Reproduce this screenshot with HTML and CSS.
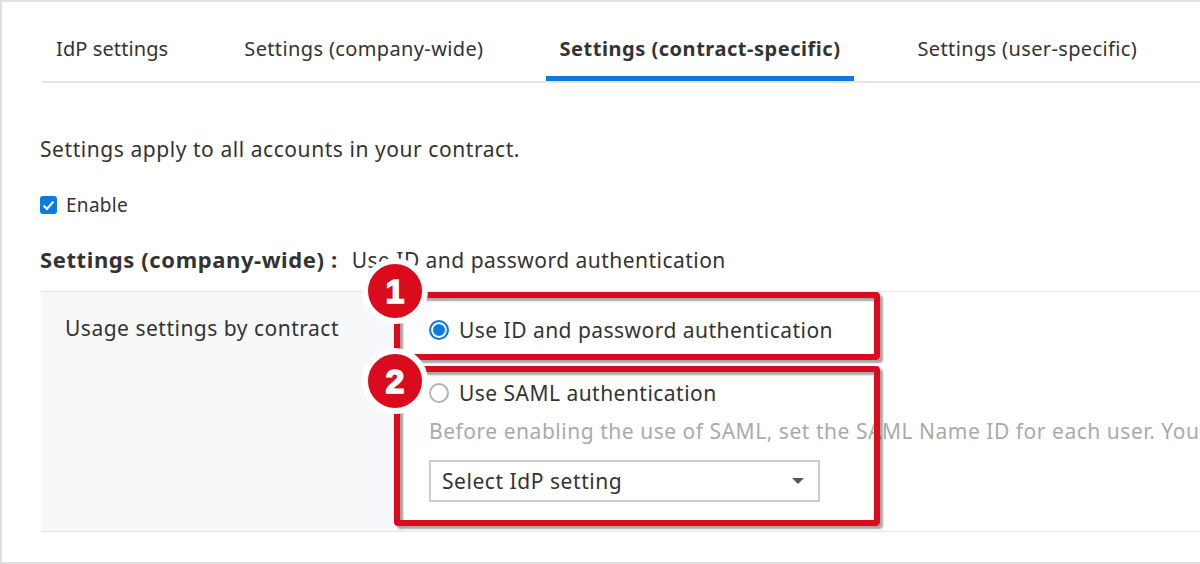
FILE: index.html
```html
<!DOCTYPE html>
<html lang="en">

<head>
    <meta charset="UTF-8">
    <meta name="viewport" content="width=device-width, initial-scale=1.0">
    <title>Settings</title>
    <link rel="stylesheet" href="styles.css">
</head>

<body>
    <div class="frame">
        <nav class="tabs">
            <a class="tab tab-idp">IdP settings</a>
            <a class="tab tab-company">Settings (company-wide)</a>
            <a class="tab tab-contract active">Settings (contract-specific)</a>
            <a class="tab tab-user">Settings (user-specific)</a>
        </nav>

        <p class="intro">Settings apply to all accounts in your contract.</p>

        <label class="enable">
            <span class="checkbox">
                <svg width="15" height="15" viewBox="0 0 15 15">
                    <path d="M2.6 7.6 L6 11 L12.4 3.6" fill="none" stroke="#fff" stroke-width="2.2" />
                </svg>
            </span>
            Enable
        </label>

        <div class="company-line">
            <strong>Settings (company-wide) :</strong>
            <span>Use ID and password authentication</span>
        </div>

        <div class="usage-row">
            <div class="usage-label">Usage settings by contract</div>
            <div class="usage-options">
                <div class="radio-line first">
                    <span class="radio checked"></span>
                    Use ID and password authentication
                </div>
                <div class="radio-line second">
                    <span class="radio"></span>
                    Use SAML authentication
                </div>
                <div class="hint">Before enabling the use of SAML, set the SAML Name ID for each user. You</div>
                <div class="select">
                    Select IdP setting
                    <span class="caret"></span>
                </div>
            </div>
        </div>

        <div class="callout callout-one"></div>
        <div class="callout callout-two"></div>
        <div class="badge badge-one">1</div>
        <div class="badge badge-two">2</div>
    </div>
</body>

</html>
```

FILE: styles.css
```css
* {
    box-sizing: border-box;
}

html,
body {
    margin: 0;
    padding: 0;
    height: 564px;
    overflow: hidden;
}

body {
    font-family: "Noto Sans", Arial, sans-serif;
    background-color: #fff;
    color: #333;
}

.frame {
    position: relative;
    width: 1200px;
    height: 564px;
    overflow: hidden;
    padding-left: 38px;
    border-top: 2px solid #e0e0e0;
    border-left: 2px solid #e0e0e0;
    border-bottom: 2px solid #e0e0e0;
}

.tabs {
    display: flex;
    height: 81px;
    margin-left: 2px;
    border-bottom: 2px solid #e6e6e6;
    font-size: 20px;
    letter-spacing: 0.37px;
    white-space: nowrap;
}

.tab {
    display: block;
    height: 79px;
    padding-top: 32px;
    line-height: 30px;
}

.tab-idp {
    margin-left: 14px;
    letter-spacing: 0.1px;
}

.tab-company {
    margin-left: 76px;
}

.tab-contract {
    margin-left: 63px;
    padding-left: 13px;
    padding-right: 14px;
    letter-spacing: 0.53px;
}

.tab-user {
    margin-left: 63px;
}

.tab.active {
    font-weight: bold;
    border-bottom: 5px solid #0a7be0;
}

.intro {
    margin: 51px 0 0;
    font-size: 21px;
    letter-spacing: 0.56px;
    line-height: 30px;
}

.enable {
    display: flex;
    align-items: center;
    gap: 9px;
    margin-top: 26px;
    font-size: 19px;
    letter-spacing: 0.3px;
    line-height: 30px;
}

.checkbox {
    display: flex;
    align-items: center;
    justify-content: center;
    width: 17px;
    height: 18px;
    border-radius: 3px;
    background-color: #0a7be0;
}

.company-line {
    display: flex;
    align-items: baseline;
    gap: 14px;
    margin-top: 24px;
    height: 30px;
    font-size: 21px;
    letter-spacing: 0.47px;
    line-height: 30px;
}

.company-line strong {
    font-size: 22px;
    letter-spacing: 0.6px;
}

.usage-row {
    display: flex;
    height: 241px;
    margin-top: 17px;
    margin-left: 1px;
    border-top: 1px solid #e2e2e2;
    border-bottom: 1px solid #e2e2e2;
}

.usage-label {
    width: 363px;
    padding: 21px 0 0 24px;
    background-color: #f7f8fa;
    font-size: 21px;
    letter-spacing: 0.5px;
    line-height: 30px;
}

.usage-options {
    flex: 1;
    min-width: 0;
    padding-left: 25px;
    background-color: #fff;
    font-size: 21px;
    letter-spacing: 0.47px;
    line-height: 30px;
    white-space: nowrap;
}

.radio-line {
    display: flex;
    align-items: center;
    gap: 10px;
}

.radio-line.first {
    margin-top: 23px;
}

.radio-line.second {
    margin-top: 33px;
}

.radio {
    width: 20px;
    height: 20px;
    border: 2px solid #b3b3b3;
    border-radius: 50%;
    background-color: #fff;
}

.radio.checked {
    border-color: #0a7be0;
    background-color: #0a7be0;
    box-shadow: inset 0 0 0 2px #fff;
}

.hint {
    margin-top: 8px;
    color: #aaa;
    letter-spacing: 0.53px;
}

.select {
    display: flex;
    align-items: center;
    justify-content: space-between;
    width: 391px;
    height: 42px;
    margin-top: 14px;
    padding: 0 14px 0 11px;
    border: 2px solid #ccc;
    letter-spacing: 0.55px;
}

.caret {
    width: 0;
    height: 0;
    border-left: 6px solid transparent;
    border-right: 6px solid transparent;
    border-top: 6px solid #555;
}

/* annotations on top of the screenshot */
.callout {
    position: absolute;
    border: 6px solid #d90b1c;
    border-radius: 4px;
    box-shadow: 3px 3px 2px rgba(0, 0, 0, 0.35), inset 3px 3px 2px rgba(0, 0, 0, 0.35);
}

.callout-one {
    left: 392px;
    top: 290px;
    width: 486px;
    height: 68px;
}

.callout-two {
    left: 392px;
    top: 364px;
    width: 486px;
    height: 160px;
}

.badge {
    position: absolute;
    left: 364px;
    width: 58px;
    height: 58px;
    border: 2px solid #fff;
    border-radius: 50%;
    background-color: #d90b1c;
    box-shadow: 0 0 0 4px #fff;
    color: #fff;
    font-family: "Liberation Sans", Arial, sans-serif;
    font-size: 34px;
    font-weight: bold;
    line-height: 54px;
    text-align: center;
    -webkit-text-stroke: 1.5px #fff;
}

.badge-one {
    top: 260px;
}

.badge-two {
    top: 350px;
}
```
